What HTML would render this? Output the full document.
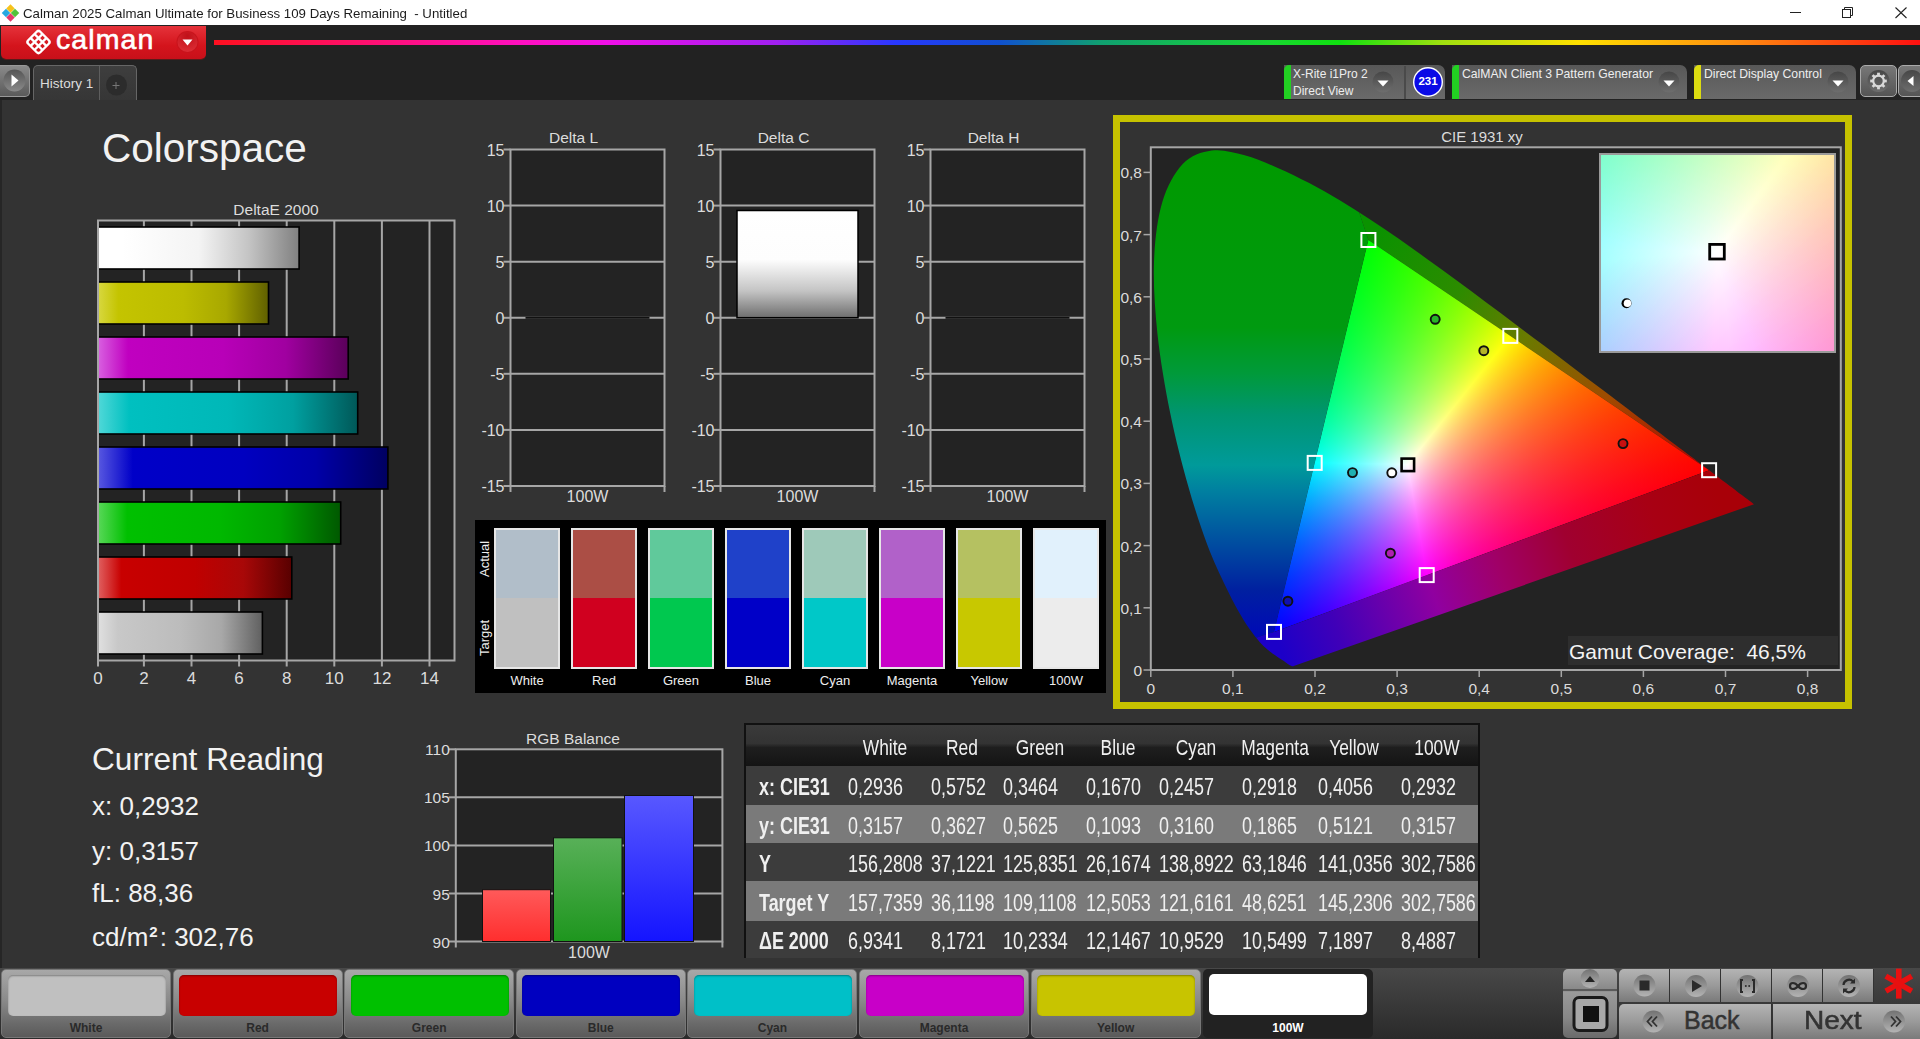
<!DOCTYPE html><html><head><meta charset="utf-8"><title>Calman</title><style>
*{box-sizing:border-box;margin:0;padding:0}
html,body{width:1920px;height:1039px;overflow:hidden}
body{position:relative;background:#333;font-family:"Liberation Sans",sans-serif;color:#eee}
.a{position:absolute}
.t{position:absolute;white-space:nowrap;line-height:1}
svg{position:absolute;left:0;top:0;overflow:visible}
</style></head><body><div class="a" style="left:0;top:0;width:1920px;height:25px;background:#fff"></div><svg width="24" height="25" style="left:0;top:2.5px">
<rect x="7.5" y="2.5" width="6" height="6" transform="rotate(45 10.5 5.5)" fill="#f6c21c"/>
<rect x="3" y="7" width="6" height="6" transform="rotate(45 6 10)" fill="#27a8e0"/>
<rect x="12" y="7" width="6" height="6" transform="rotate(45 15 10)" fill="#52c23a"/>
<rect x="7.5" y="11.5" width="6" height="6" transform="rotate(45 10.5 14.5)" fill="#e4386a"/>
</svg><div class="t" style="left:23px;top:6.5px;font-size:13.5px;color:#1b1b1b;transform:scaleX(0.982);transform-origin:0 0">Calman 2025 Calman Ultimate for Business 109 Days Remaining &nbsp;- Untitled</div><svg width="1920" height="25">
<line x1="1790" y1="12.5" x2="1801" y2="12.5" stroke="#222" stroke-width="1"/>
<rect x="1842.5" y="9.5" width="8" height="8" fill="none" stroke="#222" stroke-width="1"/>
<path d="M1844.5 9.5V7.5h8v8h-2" fill="none" stroke="#222" stroke-width="1"/>
<path d="M1895.5 7.5l11 10.5M1906.5 7.5l-11 10.5" stroke="#222" stroke-width="1.1"/>
</svg><div class="a" style="left:0;top:25px;width:1920px;height:75px;background:#222"></div><div class="a" style="left:1px;top:26px;width:205px;height:33px;border-radius:0 0 5px 5px;background:linear-gradient(#e5323a,#d4141c 60%,#c8101a);box-shadow:0 1px 0 #5a1a1a"></div><svg width="220" height="60" style="left:0;top:25px">
<g transform="translate(38.5 17) rotate(45)" fill="none" stroke="#fff" stroke-width="2.4">
<rect x="-8.5" y="-8.5" width="17" height="17" rx="2.5"/>
<line x1="-2.8" y1="-8.5" x2="-2.8" y2="8.5"/><line x1="2.8" y1="-8.5" x2="2.8" y2="8.5"/>
<line x1="-8.5" y1="-2.8" x2="8.5" y2="-2.8"/><line x1="-8.5" y1="2.8" x2="8.5" y2="2.8"/>
</g>
<circle cx="187.5" cy="17" r="11" fill="#c8141c"/>
<circle cx="187.5" cy="17" r="10" fill="url(#rbtn)"/>
<path d="M182.5 14.5h10l-5 6z" fill="#fff"/>
<defs><radialGradient id="rbtn" cx="0.5" cy="0.2" r="0.9"><stop offset="0" stop-color="#c01018"/><stop offset="1" stop-color="#e03038"/></radialGradient></defs>
</svg><div class="t" style="left:56px;top:24.7px;font-size:28.5px;color:#fff;letter-spacing:1.1px;-webkit-text-stroke:0.6px #fff">calman</div><div class="a" style="left:214px;top:40px;width:1706px;height:5px;background:linear-gradient(90deg,#ff1020 0%,#ff10c0 18%,#f010e8 23%,#a020f0 33%,#2838ff 40%,#1050d0 46%,#10a070 52%,#18d830 62%,#10e010 66%,#a0e010 72%,#ffe000 80%,#ff9010 89%,#ff1010 100%)"></div><div class="a" style="left:0;top:65px;width:30px;height:32px;border-radius:0 5px 5px 0;background:linear-gradient(#8a8a8a,#5a5a5a);border:1px solid #999;border-left:none"></div><svg width="40" height="40" style="left:0;top:62px">
<circle cx="14.5" cy="18.5" r="11" fill="url(#pg)"/>
<path d="M11.5 12.5l7 6-7 6z" fill="#fff"/>
<defs><linearGradient id="pg" x1="0" y1="0" x2="0" y2="1"><stop offset="0" stop-color="#555"/><stop offset="1" stop-color="#8a8a8a"/></linearGradient></defs>
</svg><div class="a" style="left:33px;top:65px;width:104px;height:35px;border-radius:5px 5px 0 0;background:linear-gradient(#3e3e3e,#363636);border:1px solid #666;border-bottom:none"></div><div class="a" style="left:98.5px;top:66px;width:1.5px;height:34px;background:#5e5e5e"></div><div class="t" style="left:40px;top:76.5px;font-size:13.5px;color:#ddd">History 1</div><svg width="40" height="40" style="left:96px;top:62px">
<circle cx="20.5" cy="23" r="10.5" fill="#2c2c2c"/>
<path d="M16.5 23.5h7M20 20v7" stroke="#777" stroke-width="1"/>
</svg><div class="a" style="left:1284px;top:65px;width:161px;height:34px;border-radius:0 7px 0 0;background:linear-gradient(#585858,#6a6a6a)"></div><div class="a" style="left:1284px;top:65px;width:7px;height:34px;border-radius:5px 0 0 0;background:#22d022"></div><div class="a" style="left:1452px;top:65px;width:235px;height:34px;border-radius:0 7px 0 0;background:linear-gradient(#585858,#6a6a6a)"></div><div class="a" style="left:1452px;top:65px;width:7px;height:34px;border-radius:5px 0 0 0;background:#22d022"></div><div class="a" style="left:1694px;top:65px;width:162px;height:34px;border-radius:0 7px 0 0;background:linear-gradient(#585858,#6a6a6a)"></div><div class="a" style="left:1694px;top:65px;width:7px;height:34px;border-radius:5px 0 0 0;background:#dcdc10"></div><div class="a" style="left:1404px;top:66px;width:2px;height:33px;background:#4a4a4a"></div><div class="t" style="left:1293px;top:66px;font-size:12px;color:#eee;line-height:17px">X-Rite i1Pro 2<br>Direct View</div><div class="t" style="left:1462px;top:68px;font-size:12.2px;color:#eee">CalMAN Client 3 Pattern Generator</div><div class="t" style="left:1704px;top:68px;font-size:12.2px;color:#eee">Direct Display Control</div><svg width="1920" height="110">
<defs><linearGradient id="ddg" x1="0" y1="0" x2="0" y2="1"><stop offset="0" stop-color="#464646"/><stop offset="1" stop-color="#6e6e6e"/></linearGradient></defs>
<circle cx="1383" cy="82" r="10.5" fill="url(#ddg)"/><path d="M1377.5 80.5h11l-5.5 6z" fill="#fff"/><circle cx="1669" cy="82" r="10.5" fill="url(#ddg)"/><path d="M1663.5 80.5h11l-5.5 6z" fill="#fff"/><circle cx="1838" cy="82" r="10.5" fill="url(#ddg)"/><path d="M1832.5 80.5h11l-5.5 6z" fill="#fff"/>
<circle cx="1428" cy="82" r="15" fill="#fff"/><circle cx="1428" cy="82" r="13.6" fill="#0a0ae6"/>
</svg><div class="t" style="left:1414px;top:76px;width:28px;text-align:center;font-size:11.5px;font-weight:bold;color:#fff">231</div><div class="a" style="left:1860px;top:65px;width:37px;height:32px;border-radius:5px;background:linear-gradient(#777,#555);border:1px solid #aaa"></div><div class="a" style="left:1898px;top:65px;width:30px;height:32px;border-radius:5px;background:linear-gradient(#777,#555);border:1px solid #aaa"></div><svg width="1920" height="110">
<circle cx="1878.5" cy="81" r="11" fill="url(#ddg)"/>
<g transform="translate(1878.5 81)"><rect x="-1.4" y="-8.3" width="2.8" height="3.6" fill="#d8d8d8" transform="rotate(0)"/><rect x="-1.4" y="-8.3" width="2.8" height="3.6" fill="#d8d8d8" transform="rotate(45)"/><rect x="-1.4" y="-8.3" width="2.8" height="3.6" fill="#d8d8d8" transform="rotate(90)"/><rect x="-1.4" y="-8.3" width="2.8" height="3.6" fill="#d8d8d8" transform="rotate(135)"/><rect x="-1.4" y="-8.3" width="2.8" height="3.6" fill="#d8d8d8" transform="rotate(180)"/><rect x="-1.4" y="-8.3" width="2.8" height="3.6" fill="#d8d8d8" transform="rotate(225)"/><rect x="-1.4" y="-8.3" width="2.8" height="3.6" fill="#d8d8d8" transform="rotate(270)"/><rect x="-1.4" y="-8.3" width="2.8" height="3.6" fill="#d8d8d8" transform="rotate(315)"/><circle r="5.3" fill="none" stroke="#d8d8d8" stroke-width="2.2"/></g>
<circle cx="1912" cy="81" r="11" fill="url(#ddg)"/>
<path d="M1913.5 76l-6 5 6 5z" fill="#fff"/>
</svg><div class="a" style="left:0;top:100px;width:1920px;height:868px;background:#333"></div><div class="a" style="left:0;top:100px;width:2px;height:868px;background:#262626"></div><div class="t" style="left:102px;top:127.7px;font-size:40.5px;color:#f2f2f2">Colorspace</div><svg width="1920" height="1039"><defs><linearGradient id="deb0" x1="0" y1="0" x2="1" y2="0"><stop offset="0" stop-color="#ffffff"/><stop offset="0.12" stop-color="#ffffff"/><stop offset="0.5" stop-color="#f4f4f4"/><stop offset="0.75" stop-color="#c4c4c4"/><stop offset="1" stop-color="#808080"/></linearGradient><linearGradient id="deb1" x1="0" y1="0" x2="1" y2="0"><stop offset="0" stop-color="#d8d840"/><stop offset="0.12" stop-color="#c4c400"/><stop offset="0.5" stop-color="#bcbc00"/><stop offset="0.75" stop-color="#a8a800"/><stop offset="1" stop-color="#606000"/></linearGradient><linearGradient id="deb2" x1="0" y1="0" x2="1" y2="0"><stop offset="0" stop-color="#d860e0"/><stop offset="0.12" stop-color="#c000c0"/><stop offset="0.5" stop-color="#b800b8"/><stop offset="0.75" stop-color="#a000a0"/><stop offset="1" stop-color="#5a005a"/></linearGradient><linearGradient id="deb3" x1="0" y1="0" x2="1" y2="0"><stop offset="0" stop-color="#50d8d8"/><stop offset="0.12" stop-color="#00c0c0"/><stop offset="0.5" stop-color="#00b8b8"/><stop offset="0.75" stop-color="#00a0a0"/><stop offset="1" stop-color="#005858"/></linearGradient><linearGradient id="deb4" x1="0" y1="0" x2="1" y2="0"><stop offset="0" stop-color="#5858e0"/><stop offset="0.12" stop-color="#0000c8"/><stop offset="0.5" stop-color="#0000c0"/><stop offset="0.75" stop-color="#0000a8"/><stop offset="1" stop-color="#000060"/></linearGradient><linearGradient id="deb5" x1="0" y1="0" x2="1" y2="0"><stop offset="0" stop-color="#58d858"/><stop offset="0.12" stop-color="#00c000"/><stop offset="0.5" stop-color="#00b800"/><stop offset="0.75" stop-color="#00a000"/><stop offset="1" stop-color="#005800"/></linearGradient><linearGradient id="deb6" x1="0" y1="0" x2="1" y2="0"><stop offset="0" stop-color="#e06060"/><stop offset="0.12" stop-color="#c80000"/><stop offset="0.5" stop-color="#c00000"/><stop offset="0.75" stop-color="#a80808"/><stop offset="1" stop-color="#580000"/></linearGradient><linearGradient id="deb7" x1="0" y1="0" x2="1" y2="0"><stop offset="0" stop-color="#e0e0e0"/><stop offset="0.12" stop-color="#c8c8c8"/><stop offset="0.5" stop-color="#bcbcbc"/><stop offset="0.75" stop-color="#a8a8a8"/><stop offset="1" stop-color="#606060"/></linearGradient></defs><rect x="98" y="220.5" width="356.5" height="440" fill="#232323" stroke="#a6a6a6" stroke-width="2"/><line x1="143.9" y1="220.5" x2="143.9" y2="666.5" stroke="#a6a6a6" stroke-width="2"/><line x1="191.5" y1="220.5" x2="191.5" y2="666.5" stroke="#a6a6a6" stroke-width="2"/><line x1="239.1" y1="220.5" x2="239.1" y2="666.5" stroke="#a6a6a6" stroke-width="2"/><line x1="286.7" y1="220.5" x2="286.7" y2="666.5" stroke="#a6a6a6" stroke-width="2"/><line x1="334.3" y1="220.5" x2="334.3" y2="666.5" stroke="#a6a6a6" stroke-width="2"/><line x1="381.9" y1="220.5" x2="381.9" y2="666.5" stroke="#a6a6a6" stroke-width="2"/><line x1="429.5" y1="220.5" x2="429.5" y2="666.5" stroke="#a6a6a6" stroke-width="2"/><line x1="98" y1="660.5" x2="98" y2="666.5" stroke="#a6a6a6" stroke-width="2"/><rect x="98" y="227" width="201.1" height="42" fill="url(#deb0)" stroke="#000" stroke-width="1.6"/><rect x="98" y="282" width="170.5" height="42" fill="url(#deb1)" stroke="#000" stroke-width="1.6"/><rect x="98" y="337" width="250.2" height="42" fill="url(#deb2)" stroke="#000" stroke-width="1.6"/><rect x="98" y="392" width="259.7" height="42" fill="url(#deb3)" stroke="#000" stroke-width="1.6"/><rect x="98" y="447" width="289.9" height="42" fill="url(#deb4)" stroke="#000" stroke-width="1.6"/><rect x="98" y="502" width="242.7" height="42" fill="url(#deb5)" stroke="#000" stroke-width="1.6"/><rect x="98" y="557" width="193.8" height="42" fill="url(#deb6)" stroke="#000" stroke-width="1.6"/><rect x="98" y="612" width="164.4" height="42" fill="url(#deb7)" stroke="#000" stroke-width="1.6"/><rect x="97" y="220" width="2" height="441" fill="#a6a6a6"/><text x="98" y="684" text-anchor="middle" font-size="17" fill="#dcdcdc">0</text><text x="143.9" y="684" text-anchor="middle" font-size="17" fill="#dcdcdc">2</text><text x="191.5" y="684" text-anchor="middle" font-size="17" fill="#dcdcdc">4</text><text x="239.1" y="684" text-anchor="middle" font-size="17" fill="#dcdcdc">6</text><text x="286.7" y="684" text-anchor="middle" font-size="17" fill="#dcdcdc">8</text><text x="334.3" y="684" text-anchor="middle" font-size="17" fill="#dcdcdc">10</text><text x="381.9" y="684" text-anchor="middle" font-size="17" fill="#dcdcdc">12</text><text x="429.5" y="684" text-anchor="middle" font-size="17" fill="#dcdcdc">14</text><text x="276" y="215" text-anchor="middle" font-size="15.5" fill="#dcdcdc">DeltaE 2000</text></svg><svg width="1920" height="1039"><defs><linearGradient id="dcb" x1="0" y1="0" x2="0" y2="1"><stop offset="0" stop-color="#fff"/><stop offset="0.46" stop-color="#fdfdfd"/><stop offset="0.75" stop-color="#c4c4c4"/><stop offset="1" stop-color="#6e6e6e"/></linearGradient></defs><rect x="510.5" y="149.5" width="154" height="336.5" fill="#232323" stroke="#a6a6a6" stroke-width="2"/><line x1="503.5" y1="149.5" x2="510.5" y2="149.5" stroke="#a6a6a6" stroke-width="2"/><text x="504.5" y="155.5" text-anchor="end" font-size="16" fill="#dcdcdc">15</text><line x1="510.5" y1="205.6" x2="664.5" y2="205.6" stroke="#a6a6a6" stroke-width="2"/><line x1="503.5" y1="205.6" x2="510.5" y2="205.6" stroke="#a6a6a6" stroke-width="2"/><text x="504.5" y="211.6" text-anchor="end" font-size="16" fill="#dcdcdc">10</text><line x1="510.5" y1="261.7" x2="664.5" y2="261.7" stroke="#a6a6a6" stroke-width="2"/><line x1="503.5" y1="261.7" x2="510.5" y2="261.7" stroke="#a6a6a6" stroke-width="2"/><text x="504.5" y="267.7" text-anchor="end" font-size="16" fill="#dcdcdc">5</text><line x1="510.5" y1="317.8" x2="664.5" y2="317.8" stroke="#a6a6a6" stroke-width="2"/><line x1="503.5" y1="317.8" x2="510.5" y2="317.8" stroke="#a6a6a6" stroke-width="2"/><text x="504.5" y="323.8" text-anchor="end" font-size="16" fill="#dcdcdc">0</text><line x1="510.5" y1="373.8" x2="664.5" y2="373.8" stroke="#a6a6a6" stroke-width="2"/><line x1="503.5" y1="373.8" x2="510.5" y2="373.8" stroke="#a6a6a6" stroke-width="2"/><text x="504.5" y="379.8" text-anchor="end" font-size="16" fill="#dcdcdc">-5</text><line x1="510.5" y1="429.9" x2="664.5" y2="429.9" stroke="#a6a6a6" stroke-width="2"/><line x1="503.5" y1="429.9" x2="510.5" y2="429.9" stroke="#a6a6a6" stroke-width="2"/><text x="504.5" y="435.9" text-anchor="end" font-size="16" fill="#dcdcdc">-10</text><line x1="503.5" y1="486" x2="510.5" y2="486" stroke="#a6a6a6" stroke-width="2"/><text x="504.5" y="492" text-anchor="end" font-size="16" fill="#dcdcdc">-15</text><line x1="510.5" y1="486" x2="510.5" y2="492" stroke="#a6a6a6" stroke-width="2"/><line x1="664.5" y1="486" x2="664.5" y2="492" stroke="#a6a6a6" stroke-width="2"/><text x="573.5" y="143" text-anchor="middle" font-size="15.5" fill="#dcdcdc">Delta L</text><text x="587.5" y="502" text-anchor="middle" font-size="16" fill="#dcdcdc">100W</text><line x1="525.5" y1="317.8" x2="649.5" y2="317.8" stroke="#111" stroke-width="2"/><rect x="720.5" y="149.5" width="154" height="336.5" fill="#232323" stroke="#a6a6a6" stroke-width="2"/><line x1="713.5" y1="149.5" x2="720.5" y2="149.5" stroke="#a6a6a6" stroke-width="2"/><text x="714.5" y="155.5" text-anchor="end" font-size="16" fill="#dcdcdc">15</text><line x1="720.5" y1="205.6" x2="874.5" y2="205.6" stroke="#a6a6a6" stroke-width="2"/><line x1="713.5" y1="205.6" x2="720.5" y2="205.6" stroke="#a6a6a6" stroke-width="2"/><text x="714.5" y="211.6" text-anchor="end" font-size="16" fill="#dcdcdc">10</text><line x1="720.5" y1="261.7" x2="874.5" y2="261.7" stroke="#a6a6a6" stroke-width="2"/><line x1="713.5" y1="261.7" x2="720.5" y2="261.7" stroke="#a6a6a6" stroke-width="2"/><text x="714.5" y="267.7" text-anchor="end" font-size="16" fill="#dcdcdc">5</text><line x1="720.5" y1="317.8" x2="874.5" y2="317.8" stroke="#a6a6a6" stroke-width="2"/><line x1="713.5" y1="317.8" x2="720.5" y2="317.8" stroke="#a6a6a6" stroke-width="2"/><text x="714.5" y="323.8" text-anchor="end" font-size="16" fill="#dcdcdc">0</text><line x1="720.5" y1="373.8" x2="874.5" y2="373.8" stroke="#a6a6a6" stroke-width="2"/><line x1="713.5" y1="373.8" x2="720.5" y2="373.8" stroke="#a6a6a6" stroke-width="2"/><text x="714.5" y="379.8" text-anchor="end" font-size="16" fill="#dcdcdc">-5</text><line x1="720.5" y1="429.9" x2="874.5" y2="429.9" stroke="#a6a6a6" stroke-width="2"/><line x1="713.5" y1="429.9" x2="720.5" y2="429.9" stroke="#a6a6a6" stroke-width="2"/><text x="714.5" y="435.9" text-anchor="end" font-size="16" fill="#dcdcdc">-10</text><line x1="713.5" y1="486" x2="720.5" y2="486" stroke="#a6a6a6" stroke-width="2"/><text x="714.5" y="492" text-anchor="end" font-size="16" fill="#dcdcdc">-15</text><line x1="720.5" y1="486" x2="720.5" y2="492" stroke="#a6a6a6" stroke-width="2"/><line x1="874.5" y1="486" x2="874.5" y2="492" stroke="#a6a6a6" stroke-width="2"/><text x="783.5" y="143" text-anchor="middle" font-size="15.5" fill="#dcdcdc">Delta C</text><text x="797.5" y="502" text-anchor="middle" font-size="16" fill="#dcdcdc">100W</text><rect x="737" y="210.5" width="121" height="107.2" fill="url(#dcb)" stroke="#000" stroke-width="1.5"/><rect x="930.5" y="149.5" width="154" height="336.5" fill="#232323" stroke="#a6a6a6" stroke-width="2"/><line x1="923.5" y1="149.5" x2="930.5" y2="149.5" stroke="#a6a6a6" stroke-width="2"/><text x="924.5" y="155.5" text-anchor="end" font-size="16" fill="#dcdcdc">15</text><line x1="930.5" y1="205.6" x2="1084.5" y2="205.6" stroke="#a6a6a6" stroke-width="2"/><line x1="923.5" y1="205.6" x2="930.5" y2="205.6" stroke="#a6a6a6" stroke-width="2"/><text x="924.5" y="211.6" text-anchor="end" font-size="16" fill="#dcdcdc">10</text><line x1="930.5" y1="261.7" x2="1084.5" y2="261.7" stroke="#a6a6a6" stroke-width="2"/><line x1="923.5" y1="261.7" x2="930.5" y2="261.7" stroke="#a6a6a6" stroke-width="2"/><text x="924.5" y="267.7" text-anchor="end" font-size="16" fill="#dcdcdc">5</text><line x1="930.5" y1="317.8" x2="1084.5" y2="317.8" stroke="#a6a6a6" stroke-width="2"/><line x1="923.5" y1="317.8" x2="930.5" y2="317.8" stroke="#a6a6a6" stroke-width="2"/><text x="924.5" y="323.8" text-anchor="end" font-size="16" fill="#dcdcdc">0</text><line x1="930.5" y1="373.8" x2="1084.5" y2="373.8" stroke="#a6a6a6" stroke-width="2"/><line x1="923.5" y1="373.8" x2="930.5" y2="373.8" stroke="#a6a6a6" stroke-width="2"/><text x="924.5" y="379.8" text-anchor="end" font-size="16" fill="#dcdcdc">-5</text><line x1="930.5" y1="429.9" x2="1084.5" y2="429.9" stroke="#a6a6a6" stroke-width="2"/><line x1="923.5" y1="429.9" x2="930.5" y2="429.9" stroke="#a6a6a6" stroke-width="2"/><text x="924.5" y="435.9" text-anchor="end" font-size="16" fill="#dcdcdc">-10</text><line x1="923.5" y1="486" x2="930.5" y2="486" stroke="#a6a6a6" stroke-width="2"/><text x="924.5" y="492" text-anchor="end" font-size="16" fill="#dcdcdc">-15</text><line x1="930.5" y1="486" x2="930.5" y2="492" stroke="#a6a6a6" stroke-width="2"/><line x1="1084.5" y1="486" x2="1084.5" y2="492" stroke="#a6a6a6" stroke-width="2"/><text x="993.5" y="143" text-anchor="middle" font-size="15.5" fill="#dcdcdc">Delta H</text><text x="1007.5" y="502" text-anchor="middle" font-size="16" fill="#dcdcdc">100W</text><line x1="945.5" y1="317.8" x2="1069.5" y2="317.8" stroke="#111" stroke-width="2"/></svg><div class="a" style="left:475px;top:520px;width:631px;height:173px;background:#000"></div><div class="a" style="left:494px;top:528px;width:66px;height:141px;border:2px solid #e6e6e6;background:linear-gradient(#b1bec9 50%,#c0c0c0 50%)"></div><div class="t" style="left:494px;top:674px;width:66px;text-align:center;font-size:13px;color:#eee">White</div><div class="a" style="left:571px;top:528px;width:66px;height:141px;border:2px solid #e6e6e6;background:linear-gradient(#ab4e45 50%,#d0001f 50%)"></div><div class="t" style="left:571px;top:674px;width:66px;text-align:center;font-size:13px;color:#eee">Red</div><div class="a" style="left:648px;top:528px;width:66px;height:141px;border:2px solid #e6e6e6;background:linear-gradient(#60c99b 50%,#00c84f 50%)"></div><div class="t" style="left:648px;top:674px;width:66px;text-align:center;font-size:13px;color:#eee">Green</div><div class="a" style="left:725px;top:528px;width:66px;height:141px;border:2px solid #e6e6e6;background:linear-gradient(#1f41c9 50%,#0000c8 50%)"></div><div class="t" style="left:725px;top:674px;width:66px;text-align:center;font-size:13px;color:#eee">Blue</div><div class="a" style="left:802px;top:528px;width:66px;height:141px;border:2px solid #e6e6e6;background:linear-gradient(#9ec9b9 50%,#00c8c8 50%)"></div><div class="t" style="left:802px;top:674px;width:66px;text-align:center;font-size:13px;color:#eee">Cyan</div><div class="a" style="left:879px;top:528px;width:66px;height:141px;border:2px solid #e6e6e6;background:linear-gradient(#b161c9 50%,#c800c8 50%)"></div><div class="t" style="left:879px;top:674px;width:66px;text-align:center;font-size:13px;color:#eee">Magenta</div><div class="a" style="left:956px;top:528px;width:66px;height:141px;border:2px solid #e6e6e6;background:linear-gradient(#b5c161 50%,#c8c800 50%)"></div><div class="t" style="left:956px;top:674px;width:66px;text-align:center;font-size:13px;color:#eee">Yellow</div><div class="a" style="left:1033px;top:528px;width:66px;height:141px;border:2px solid #e6e6e6;background:linear-gradient(#e1f1fc 50%,#ececec 50%)"></div><div class="t" style="left:1033px;top:674px;width:66px;text-align:center;font-size:13px;color:#eee">100W</div><div class="t" style="left:477px;top:562px;width:16px;height:14px;font-size:13px;color:#eee;transform:rotate(-90deg);transform-origin:8px 7px;text-align:center;">Actual</div><div class="t" style="left:477px;top:641px;width:16px;height:14px;font-size:13px;color:#eee;transform:rotate(-90deg);transform-origin:8px 7px;text-align:center;">Target</div><div class="a" style="left:1113px;top:114.5px;width:739px;height:594px;border:7.5px solid #c6c200"></div><svg width="1920" height="1039"><defs><clipPath id="loc"><path d="M1293.7 666.1C1293.7 666.1 1293.6 666.1 1293.5 666.2C1293.4 666.2 1293.2 666.2 1293.1 666.2C1292.9 666.2 1292.8 666.2 1292.5 666.2C1292.2 666.2 1291.8 666.1 1291.5 666C1291.2 665.9 1291 665.8 1290.6 665.6C1290.3 665.4 1289.9 665.2 1289.5 664.9C1289 664.6 1288.4 664.3 1287.8 663.9C1287.2 663.4 1286.6 663 1285.8 662.4C1285 661.9 1284.1 661.3 1283.1 660.6C1282 659.9 1280.8 659.1 1279.4 658.2C1278 657.3 1276.5 656.3 1274.8 655.1C1273 653.8 1271.1 652.5 1269 650.7C1266.9 648.9 1264.8 647.3 1262 644.4C1259.3 641.5 1256.2 638.1 1252.7 633.2C1249.1 628.4 1245.3 623 1240.8 615.2C1236.3 607.4 1231.4 598.5 1225.8 586.7C1220.2 574.9 1213.5 561.2 1207.2 544.4C1200.9 527.5 1194.3 507.7 1188.1 485.7C1181.9 463.7 1175.2 437.7 1170.1 412.5C1165 387.3 1160.2 359.4 1157.5 334.3C1154.9 309.2 1153.2 283.9 1154 261.9C1154.8 240 1157.4 218.9 1162.2 202.6C1167 186.3 1174.5 172.8 1182.7 164.1C1191 155.5 1201.5 152 1211.8 150.6C1222.1 149.1 1233.6 152.4 1244.6 155.3C1255.6 158.2 1267 163.3 1277.8 167.9C1288.6 172.6 1298.9 177.7 1309.2 183C1319.4 188.4 1329.3 194.1 1339.3 200C1349.3 206 1359.2 212.3 1369 218.7C1378.9 225.1 1388.6 231.8 1398.4 238.6C1408.2 245.4 1417.9 252.3 1427.7 259.4C1437.5 266.4 1447.3 273.6 1457.1 280.8C1466.9 287.9 1476.6 295.2 1486.3 302.5C1496.1 309.7 1505.8 317 1515.4 324.2C1525 331.4 1534.5 338.6 1543.9 345.6C1553.3 352.7 1562.5 359.7 1571.6 366.5C1580.6 373.4 1589.5 380.1 1598.1 386.6C1606.7 393 1615.1 399.3 1623 405.3C1631 411.3 1638.7 417.2 1645.8 422.6C1652.9 427.9 1659.4 432.8 1665.6 437.5C1671.8 442.2 1677.7 446.6 1683 450.6C1688.3 454.6 1693.1 458.2 1697.4 461.5C1701.8 464.7 1705.6 467.7 1709.2 470.3C1712.7 473 1715.7 475.3 1718.5 477.4C1721.3 479.6 1723.7 481.3 1726 483C1728.2 484.7 1730.2 486.2 1732 487.6C1733.8 489 1735.5 490.2 1737 491.4C1738.5 492.5 1739.9 493.6 1741.1 494.5C1742.3 495.4 1743.4 496.2 1744.4 496.9C1745.3 497.6 1746.1 498.2 1746.8 498.8C1747.6 499.3 1748.2 499.8 1748.7 500.2C1749.3 500.6 1749.6 500.9 1750.1 501.3C1750.6 501.6 1751.1 502 1751.8 502.5C1752.4 503 1753.6 503.9 1754 504.2Z"/></clipPath><linearGradient id="cg1" gradientUnits="userSpaceOnUse" x1="1150.8" y1="159.2" x2="1150.8" y2="669.2"><stop offset="0" stop-color="#009a00"/><stop offset="0.33" stop-color="#009a10"/><stop offset="0.42" stop-color="#009a3a"/><stop offset="0.5" stop-color="#009570"/><stop offset="0.6" stop-color="#009a9a"/><stop offset="0.65" stop-color="#0080a0"/><stop offset="0.747" stop-color="#0050a0"/><stop offset="0.845" stop-color="#0020a0"/><stop offset="0.94" stop-color="#0008b8"/><stop offset="1" stop-color="#0000d0"/></linearGradient><linearGradient id="cg2" gradientUnits="userSpaceOnUse" x1="1368.4" y1="240" x2="1709.1" y2="470.2"><stop offset="0" stop-color="#0a9200"/><stop offset="0.25" stop-color="#2c8c00"/><stop offset="0.45" stop-color="#6a7a00"/><stop offset="0.7" stop-color="#a04a00"/><stop offset="1" stop-color="#b00000"/></linearGradient><linearGradient id="cg3" gradientUnits="userSpaceOnUse" x1="1274" y1="631.9" x2="1709.1" y2="470.2"><stop offset="0" stop-color="#1c00c8"/><stop offset="0.13" stop-color="#4000b8"/><stop offset="0.35" stop-color="#9000a0"/><stop offset="0.5" stop-color="#a00068"/><stop offset="0.66" stop-color="#a00030"/><stop offset="0.85" stop-color="#a80014"/><stop offset="1" stop-color="#a80008"/></linearGradient></defs><rect x="1150.8" y="147" width="690" height="523" fill="#232323"/><g clip-path="url(#loc)"><polygon points="1368.4,240 1274,631.9 974,731.9 968.4,-60 1268.4,-60" fill="url(#cg1)"/><polygon points="1368.4,240 1268.4,-60 2009.1,170.2 2009.1,470.2 1709.1,470.2" fill="url(#cg2)"/><polygon points="1274,631.9 1709.1,470.2 2009.1,470.2 2009.1,770.2 1174,831.9 974,731.9" fill="url(#cg3)"/></g></svg><div class="a" style="left:1150px;top:147px;width:690px;height:523px;isolation:isolate;clip-path:polygon(559.1px 323.2px,218.4px 93px,124px 484.9px);"><div class="a" style="left:0;top:0;width:690px;height:523px;background:#000"></div><div class="a" style="left:0;top:0;width:690px;height:523px;mix-blend-mode:screen"><div class="a" style="left:0;top:0;width:690px;height:523px;background:rgb(255,0,0);clip-path:polygon(256.7px 317.6px,276.3px 428.7px,559.9px 323.2px,360.3px 188.1px)"></div><div class="a" style="left:0;top:0;width:690px;height:523px;background:conic-gradient(from 0deg at 124px 484.9px,rgb(0,0,0) 13.547deg,rgb(6,0,0) 14.503deg,rgb(13,0,0) 15.470deg,rgb(20,0,0) 16.449deg,rgb(27,0,0) 17.439deg,rgb(34,0,0) 18.438deg,rgb(42,0,0) 19.448deg,rgb(49,0,0) 20.467deg,rgb(58,0,0) 21.494deg,rgb(66,0,0) 22.530deg,rgb(75,0,0) 23.574deg,rgb(84,0,0) 24.625deg,rgb(94,0,0) 25.682deg,rgb(104,0,0) 26.745deg,rgb(115,0,0) 27.813deg,rgb(126,0,0) 28.885deg,rgb(137,0,0) 29.961deg,rgb(150,0,0) 31.040deg,rgb(162,0,0) 32.121deg,rgb(176,0,0) 33.203deg,rgb(190,0,0) 34.286deg,rgb(205,0,0) 35.368deg,rgb(221,0,0) 36.450deg,rgb(237,0,0) 37.530deg,rgb(255,0,0) 38.608deg);clip-path:polygon(257.6px 318.4px,361.1px 188.6px,218.2px 92.2px,164.1px 316.5px)"></div><div class="a" style="left:0;top:0;width:690px;height:523px;background:conic-gradient(from 0deg at 218.4px 93px,rgb(255,0,0) 170.118deg,rgb(239,0,0) 171.238deg,rgb(224,0,0) 172.350deg,rgb(209,0,0) 173.452deg,rgb(195,0,0) 174.544deg,rgb(181,0,0) 175.625deg,rgb(168,0,0) 176.694deg,rgb(156,0,0) 177.751deg,rgb(144,0,0) 178.795deg,rgb(132,0,0) 179.827deg,rgb(121,0,0) 180.845deg,rgb(111,0,0) 181.849deg,rgb(100,0,0) 182.838deg,rgb(90,0,0) 183.814deg,rgb(81,0,0) 184.774deg,rgb(71,0,0) 185.720deg,rgb(62,0,0) 186.651deg,rgb(54,0,0) 187.566deg,rgb(45,0,0) 188.467deg,rgb(37,0,0) 189.352deg,rgb(29,0,0) 190.221deg,rgb(22,0,0) 191.076deg,rgb(14,0,0) 191.914deg,rgb(7,0,0) 192.738deg,rgb(0,0,0) 193.547deg);clip-path:polygon(258px 316.9px,164.3px 315.2px,123.4px 485.5px,277.4px 428.5px)"></div></div><div class="a" style="left:0;top:0;width:690px;height:523px;mix-blend-mode:screen"><div class="a" style="left:0;top:0;width:690px;height:523px;background:conic-gradient(from 0deg at 124px 484.9px,rgb(0,255,0) 38.608deg,rgb(0,231,0) 40.111deg,rgb(0,209,0) 41.606deg,rgb(0,190,0) 43.091deg,rgb(0,172,0) 44.564deg,rgb(0,156,0) 46.023deg,rgb(0,142,0) 47.466deg,rgb(0,128,0) 48.892deg,rgb(0,116,0) 50.299deg,rgb(0,104,0) 51.687deg,rgb(0,94,0) 53.053deg,rgb(0,84,0) 54.398deg,rgb(0,75,0) 55.719deg,rgb(0,66,0) 57.017deg,rgb(0,58,0) 58.290deg,rgb(0,51,0) 59.539deg,rgb(0,44,0) 60.761deg,rgb(0,37,0) 61.959deg,rgb(0,31,0) 63.130deg,rgb(0,25,0) 64.275deg,rgb(0,20,0) 65.394deg,rgb(0,14,0) 66.487deg,rgb(0,9,0) 67.554deg,rgb(0,5,0) 68.596deg,rgb(0,0,0) 69.612deg);clip-path:polygon(256.7px 317.6px,276.3px 428.7px,559.9px 323.2px,360.3px 188.1px)"></div><div class="a" style="left:0;top:0;width:690px;height:523px;background:rgb(0,255,0);clip-path:polygon(257.6px 318.4px,361.1px 188.6px,218.2px 92.2px,164.1px 316.5px)"></div><div class="a" style="left:0;top:0;width:690px;height:523px;background:conic-gradient(from 0deg at 559.1px 323.2px,rgb(0,0,0) 249.612deg,rgb(0,6,0) 250.360deg,rgb(0,13,0) 251.121deg,rgb(0,19,0) 251.896deg,rgb(0,26,0) 252.683deg,rgb(0,33,0) 253.483deg,rgb(0,41,0) 254.297deg,rgb(0,48,0) 255.124deg,rgb(0,56,0) 255.964deg,rgb(0,65,0) 256.817deg,rgb(0,74,0) 257.683deg,rgb(0,83,0) 258.562deg,rgb(0,92,0) 259.453deg,rgb(0,102,0) 260.358deg,rgb(0,113,0) 261.274deg,rgb(0,124,0) 262.203deg,rgb(0,136,0) 263.144deg,rgb(0,148,0) 264.096deg,rgb(0,161,0) 265.060deg,rgb(0,174,0) 266.034deg,rgb(0,189,0) 267.020deg,rgb(0,204,0) 268.015deg,rgb(0,220,0) 269.020deg,rgb(0,237,0) 270.034deg,rgb(0,255,0) 271.057deg);clip-path:polygon(258px 316.9px,164.3px 315.2px,123.4px 485.5px,277.4px 428.5px)"></div></div><div class="a" style="left:0;top:0;width:690px;height:523px;mix-blend-mode:screen"><div class="a" style="left:0;top:0;width:690px;height:523px;background:conic-gradient(from 0deg at 218.4px 93px,rgb(0,0,0) 124.038deg,rgb(0,0,4) 125.485deg,rgb(0,0,8) 126.985deg,rgb(0,0,12) 128.536deg,rgb(0,0,17) 130.139deg,rgb(0,0,22) 131.795deg,rgb(0,0,27) 133.503deg,rgb(0,0,32) 135.263deg,rgb(0,0,38) 137.072deg,rgb(0,0,44) 138.931deg,rgb(0,0,51) 140.836deg,rgb(0,0,58) 142.785deg,rgb(0,0,66) 144.775deg,rgb(0,0,75) 146.802deg,rgb(0,0,84) 148.862deg,rgb(0,0,94) 150.951deg,rgb(0,0,105) 153.063deg,rgb(0,0,117) 155.194deg,rgb(0,0,131) 157.337deg,rgb(0,0,146) 159.486deg,rgb(0,0,163) 161.635deg,rgb(0,0,181) 163.779deg,rgb(0,0,203) 165.911deg,rgb(0,0,227) 168.026deg,rgb(0,0,255) 170.118deg);clip-path:polygon(256.7px 317.6px,276.3px 428.7px,559.9px 323.2px,360.3px 188.1px)"></div><div class="a" style="left:0;top:0;width:690px;height:523px;background:conic-gradient(from 0deg at 559.1px 323.2px,rgb(0,0,255) 271.057deg,rgb(0,0,232) 272.418deg,rgb(0,0,211) 273.793deg,rgb(0,0,192) 275.178deg,rgb(0,0,174) 276.574deg,rgb(0,0,158) 277.978deg,rgb(0,0,144) 279.388deg,rgb(0,0,130) 280.804deg,rgb(0,0,118) 282.223deg,rgb(0,0,107) 283.644deg,rgb(0,0,96) 285.065deg,rgb(0,0,86) 286.483deg,rgb(0,0,77) 287.899deg,rgb(0,0,68) 289.308deg,rgb(0,0,60) 290.711deg,rgb(0,0,52) 292.106deg,rgb(0,0,45) 293.490deg,rgb(0,0,38) 294.862deg,rgb(0,0,32) 296.222deg,rgb(0,0,26) 297.567deg,rgb(0,0,20) 298.896deg,rgb(0,0,15) 300.209deg,rgb(0,0,10) 301.504deg,rgb(0,0,5) 302.781deg,rgb(0,0,0) 304.038deg);clip-path:polygon(257.6px 318.4px,361.1px 188.6px,218.2px 92.2px,164.1px 316.5px)"></div><div class="a" style="left:0;top:0;width:690px;height:523px;background:rgb(0,0,255);clip-path:polygon(258px 316.9px,164.3px 315.2px,123.4px 485.5px,277.4px 428.5px)"></div></div></div><svg width="1920" height="1039"><defs></defs><rect x="1150.8" y="147.3" width="690" height="522.7" fill="none" stroke="#a6a6a6" stroke-width="2"/><line x1="1143.5" y1="670" x2="1150.8" y2="670" stroke="#a6a6a6" stroke-width="1.5"/><text x="1142" y="676" text-anchor="end" font-size="15.5" fill="#dcdcdc">0</text><line x1="1150.8" y1="670" x2="1150.8" y2="677" stroke="#a6a6a6" stroke-width="1.5"/><text x="1150.8" y="694" text-anchor="middle" font-size="15.5" fill="#dcdcdc">0</text><line x1="1143.5" y1="607.8" x2="1150.8" y2="607.8" stroke="#a6a6a6" stroke-width="1.5"/><text x="1142" y="613.8" text-anchor="end" font-size="15.5" fill="#dcdcdc">0,1</text><line x1="1232.9" y1="670" x2="1232.9" y2="677" stroke="#a6a6a6" stroke-width="1.5"/><text x="1232.9" y="694" text-anchor="middle" font-size="15.5" fill="#dcdcdc">0,1</text><line x1="1143.5" y1="545.6" x2="1150.8" y2="545.6" stroke="#a6a6a6" stroke-width="1.5"/><text x="1142" y="551.6" text-anchor="end" font-size="15.5" fill="#dcdcdc">0,2</text><line x1="1315" y1="670" x2="1315" y2="677" stroke="#a6a6a6" stroke-width="1.5"/><text x="1315" y="694" text-anchor="middle" font-size="15.5" fill="#dcdcdc">0,2</text><line x1="1143.5" y1="483.4" x2="1150.8" y2="483.4" stroke="#a6a6a6" stroke-width="1.5"/><text x="1142" y="489.4" text-anchor="end" font-size="15.5" fill="#dcdcdc">0,3</text><line x1="1397.1" y1="670" x2="1397.1" y2="677" stroke="#a6a6a6" stroke-width="1.5"/><text x="1397.1" y="694" text-anchor="middle" font-size="15.5" fill="#dcdcdc">0,3</text><line x1="1143.5" y1="421.2" x2="1150.8" y2="421.2" stroke="#a6a6a6" stroke-width="1.5"/><text x="1142" y="427.2" text-anchor="end" font-size="15.5" fill="#dcdcdc">0,4</text><line x1="1479.2" y1="670" x2="1479.2" y2="677" stroke="#a6a6a6" stroke-width="1.5"/><text x="1479.2" y="694" text-anchor="middle" font-size="15.5" fill="#dcdcdc">0,4</text><line x1="1143.5" y1="359" x2="1150.8" y2="359" stroke="#a6a6a6" stroke-width="1.5"/><text x="1142" y="365" text-anchor="end" font-size="15.5" fill="#dcdcdc">0,5</text><line x1="1561.3" y1="670" x2="1561.3" y2="677" stroke="#a6a6a6" stroke-width="1.5"/><text x="1561.3" y="694" text-anchor="middle" font-size="15.5" fill="#dcdcdc">0,5</text><line x1="1143.5" y1="296.8" x2="1150.8" y2="296.8" stroke="#a6a6a6" stroke-width="1.5"/><text x="1142" y="302.8" text-anchor="end" font-size="15.5" fill="#dcdcdc">0,6</text><line x1="1643.4" y1="670" x2="1643.4" y2="677" stroke="#a6a6a6" stroke-width="1.5"/><text x="1643.4" y="694" text-anchor="middle" font-size="15.5" fill="#dcdcdc">0,6</text><line x1="1143.5" y1="234.6" x2="1150.8" y2="234.6" stroke="#a6a6a6" stroke-width="1.5"/><text x="1142" y="240.6" text-anchor="end" font-size="15.5" fill="#dcdcdc">0,7</text><line x1="1725.5" y1="670" x2="1725.5" y2="677" stroke="#a6a6a6" stroke-width="1.5"/><text x="1725.5" y="694" text-anchor="middle" font-size="15.5" fill="#dcdcdc">0,7</text><line x1="1143.5" y1="172.4" x2="1150.8" y2="172.4" stroke="#a6a6a6" stroke-width="1.5"/><text x="1142" y="178.4" text-anchor="end" font-size="15.5" fill="#dcdcdc">0,8</text><line x1="1807.6" y1="670" x2="1807.6" y2="677" stroke="#a6a6a6" stroke-width="1.5"/><text x="1807.6" y="694" text-anchor="middle" font-size="15.5" fill="#dcdcdc">0,8</text><text x="1482" y="142" text-anchor="middle" font-size="15" fill="#dcdcdc">CIE 1931 xy</text><rect x="1702.1" y="463.2" width="14" height="14" fill="none" stroke="#fff" stroke-width="2"/><rect x="1361.4" y="233" width="14" height="14" fill="none" stroke="#fff" stroke-width="2"/><rect x="1267" y="624.9" width="14" height="14" fill="none" stroke="#fff" stroke-width="2"/><rect x="1307.7" y="455.9" width="14" height="14" fill="none" stroke="#fff" stroke-width="2"/><rect x="1419.7" y="568.1" width="14" height="14" fill="none" stroke="#fff" stroke-width="2"/><rect x="1503.3" y="328.9" width="14" height="14" fill="none" stroke="#fff" stroke-width="2"/><rect x="1401.6" y="458.6" width="12.5" height="12.5" fill="none" stroke="#000" stroke-width="2.6"/><circle cx="1391.8" cy="472.8" r="4.5" fill="#ffffff" stroke="#111" stroke-width="1.9"/><circle cx="1623" cy="443.6" r="4.5" fill="#c81010" stroke="#111" stroke-width="1.9"/><circle cx="1435.2" cy="319.3" r="4.5" fill="#28b428" stroke="#111" stroke-width="1.9"/><circle cx="1287.9" cy="601.2" r="4.5" fill="#1010b0" stroke="#111" stroke-width="1.9"/><circle cx="1352.5" cy="472.6" r="4.5" fill="#20b0b0" stroke="#111" stroke-width="1.9"/><circle cx="1390.4" cy="553.2" r="4.5" fill="#b020b0" stroke="#111" stroke-width="1.9"/><circle cx="1483.8" cy="350.7" r="4.5" fill="#b4b428" stroke="#111" stroke-width="1.9"/></svg><div class="a" style="left:1599px;top:152.5px;width:237px;height:200px;border:2px solid #9a9a9a"></div><div class="a" style="left:1601px;top:154.5px;width:233px;height:196px;isolation:isolate;filter:saturate(1.4);overflow:hidden;"><div class="a" style="left:0;top:0;width:233px;height:196px;background:#000"></div><div class="a" style="left:0;top:0;width:233px;height:196px;mix-blend-mode:screen"><div class="a" style="left:0;top:0;width:233px;height:196px;background:rgb(255,0,0);clip-path:polygon(115.2px 97px,223.7px 788.4px,1814.1px 132px,694.5px -708px)"></div><div class="a" style="left:0;top:0;width:233px;height:196px;background:conic-gradient(from 0deg at -635.8px 1142.6px,rgb(0,0,0) 12.244deg,rgb(6,0,0) 13.115deg,rgb(13,0,0) 13.997deg,rgb(20,0,0) 14.892deg,rgb(27,0,0) 15.797deg,rgb(34,0,0) 16.714deg,rgb(42,0,0) 17.642deg,rgb(49,0,0) 18.580deg,rgb(58,0,0) 19.529deg,rgb(66,0,0) 20.487deg,rgb(75,0,0) 21.455deg,rgb(84,0,0) 22.432deg,rgb(94,0,0) 23.418deg,rgb(104,0,0) 24.412deg,rgb(115,0,0) 25.414deg,rgb(126,0,0) 26.422deg,rgb(137,0,0) 27.438deg,rgb(150,0,0) 28.459deg,rgb(162,0,0) 29.486deg,rgb(176,0,0) 30.517deg,rgb(190,0,0) 31.553deg,rgb(205,0,0) 32.592deg,rgb(221,0,0) 33.634deg,rgb(237,0,0) 34.678deg,rgb(255,0,0) 35.724deg);clip-path:polygon(116.1px 97.8px,695.3px -707.5px,-104.6px -1307px,-407.2px 87.1px)"></div><div class="a" style="left:0;top:0;width:233px;height:196px;background:conic-gradient(from 0deg at -104.4px -1306.2px,rgb(255,0,0) 171.083deg,rgb(239,0,0) 172.097deg,rgb(224,0,0) 173.102deg,rgb(209,0,0) 174.098deg,rgb(195,0,0) 175.083deg,rgb(181,0,0) 176.058deg,rgb(168,0,0) 177.022deg,rgb(156,0,0) 177.974deg,rgb(144,0,0) 178.915deg,rgb(132,0,0) 179.844deg,rgb(121,0,0) 180.761deg,rgb(111,0,0) 181.665deg,rgb(100,0,0) 182.557deg,rgb(90,0,0) 183.436deg,rgb(81,0,0) 184.302deg,rgb(71,0,0) 185.155deg,rgb(62,0,0) 185.995deg,rgb(54,0,0) 186.822deg,rgb(45,0,0) 187.636deg,rgb(37,0,0) 188.437deg,rgb(29,0,0) 189.224deg,rgb(22,0,0) 189.999deg,rgb(14,0,0) 190.760deg,rgb(7,0,0) 191.508deg,rgb(0,0,0) 192.244deg);clip-path:polygon(116.4px 96.3px,-407px 85.8px,-636.3px 1143.2px,224.8px 788.2px)"></div></div><div class="a" style="left:0;top:0;width:233px;height:196px;mix-blend-mode:screen"><div class="a" style="left:0;top:0;width:233px;height:196px;background:conic-gradient(from 0deg at -635.8px 1142.6px,rgb(0,255,0) 35.724deg,rgb(0,231,0) 37.189deg,rgb(0,209,0) 38.654deg,rgb(0,190,0) 40.117deg,rgb(0,172,0) 41.575deg,rgb(0,156,0) 43.028deg,rgb(0,142,0) 44.472deg,rgb(0,128,0) 45.907deg,rgb(0,116,0) 47.330deg,rgb(0,104,0) 48.741deg,rgb(0,94,0) 50.137deg,rgb(0,84,0) 51.517deg,rgb(0,75,0) 52.881deg,rgb(0,66,0) 54.225deg,rgb(0,58,0) 55.551deg,rgb(0,51,0) 56.856deg,rgb(0,44,0) 58.139deg,rgb(0,37,0) 59.401deg,rgb(0,31,0) 60.640deg,rgb(0,25,0) 61.856deg,rgb(0,20,0) 63.048deg,rgb(0,14,0) 64.217deg,rgb(0,9,0) 65.361deg,rgb(0,5,0) 66.481deg,rgb(0,0,0) 67.577deg);clip-path:polygon(115.2px 97px,223.7px 788.4px,1814.1px 132px,694.5px -708px)"></div><div class="a" style="left:0;top:0;width:233px;height:196px;background:rgb(0,255,0);clip-path:polygon(116.1px 97.8px,695.3px -707.5px,-104.6px -1307px,-407.2px 87.1px)"></div><div class="a" style="left:0;top:0;width:233px;height:196px;background:conic-gradient(from 0deg at 1813.3px 132px,rgb(0,0,0) 247.577deg,rgb(0,6,0) 248.385deg,rgb(0,13,0) 249.210deg,rgb(0,19,0) 250.050deg,rgb(0,26,0) 250.905deg,rgb(0,33,0) 251.777deg,rgb(0,41,0) 252.665deg,rgb(0,48,0) 253.568deg,rgb(0,56,0) 254.487deg,rgb(0,65,0) 255.422deg,rgb(0,74,0) 256.373deg,rgb(0,83,0) 257.339deg,rgb(0,92,0) 258.321deg,rgb(0,102,0) 259.318deg,rgb(0,113,0) 260.329deg,rgb(0,124,0) 261.356deg,rgb(0,136,0) 262.396deg,rgb(0,148,0) 263.450deg,rgb(0,161,0) 264.518deg,rgb(0,174,0) 265.599deg,rgb(0,189,0) 266.692deg,rgb(0,204,0) 267.796deg,rgb(0,220,0) 268.912deg,rgb(0,237,0) 270.038deg,rgb(0,255,0) 271.174deg);clip-path:polygon(116.4px 96.3px,-407px 85.8px,-636.3px 1143.2px,224.8px 788.2px)"></div></div><div class="a" style="left:0;top:0;width:233px;height:196px;mix-blend-mode:screen"><div class="a" style="left:0;top:0;width:233px;height:196px;background:conic-gradient(from 0deg at -104.4px -1306.2px,rgb(0,0,0) 126.868deg,rgb(0,0,4) 128.363deg,rgb(0,0,8) 129.902deg,rgb(0,0,12) 131.486deg,rgb(0,0,17) 133.114deg,rgb(0,0,22) 134.785deg,rgb(0,0,27) 136.499deg,rgb(0,0,32) 138.252deg,rgb(0,0,38) 140.045deg,rgb(0,0,44) 141.873deg,rgb(0,0,51) 143.735deg,rgb(0,0,58) 145.627deg,rgb(0,0,66) 147.545deg,rgb(0,0,75) 149.487deg,rgb(0,0,84) 151.448deg,rgb(0,0,94) 153.423deg,rgb(0,0,105) 155.408deg,rgb(0,0,117) 157.399deg,rgb(0,0,131) 159.389deg,rgb(0,0,146) 161.376deg,rgb(0,0,163) 163.353deg,rgb(0,0,181) 165.317deg,rgb(0,0,203) 167.262deg,rgb(0,0,227) 169.185deg,rgb(0,0,255) 171.083deg);clip-path:polygon(115.2px 97px,223.7px 788.4px,1814.1px 132px,694.5px -708px)"></div><div class="a" style="left:0;top:0;width:233px;height:196px;background:conic-gradient(from 0deg at 1813.3px 132px,rgb(0,0,255) 271.174deg,rgb(0,0,232) 272.685deg,rgb(0,0,211) 274.209deg,rgb(0,0,192) 275.746deg,rgb(0,0,174) 277.291deg,rgb(0,0,158) 278.844deg,rgb(0,0,144) 280.402deg,rgb(0,0,130) 281.963deg,rgb(0,0,118) 283.524deg,rgb(0,0,107) 285.083deg,rgb(0,0,96) 286.638deg,rgb(0,0,86) 288.187deg,rgb(0,0,77) 289.727deg,rgb(0,0,68) 291.256deg,rgb(0,0,60) 292.772deg,rgb(0,0,52) 294.274deg,rgb(0,0,45) 295.758deg,rgb(0,0,38) 297.225deg,rgb(0,0,32) 298.672deg,rgb(0,0,26) 300.097deg,rgb(0,0,20) 301.501deg,rgb(0,0,15) 302.880deg,rgb(0,0,10) 304.235deg,rgb(0,0,5) 305.565deg,rgb(0,0,0) 306.868deg);clip-path:polygon(116.1px 97.8px,695.3px -707.5px,-104.6px -1307px,-407.2px 87.1px)"></div><div class="a" style="left:0;top:0;width:233px;height:196px;background:rgb(0,0,255);clip-path:polygon(116.4px 96.3px,-407px 85.8px,-636.3px 1143.2px,224.8px 788.2px)"></div></div></div><svg width="1920" height="1039"><rect x="1709.7" y="244.4" width="14.6" height="14.6" fill="none" stroke="#000" stroke-width="2.8"/><circle cx="1626.5" cy="303.2" r="5" fill="#000"/><circle cx="1627.5" cy="303.2" r="3.8" fill="#fff"/></svg><div class="a" style="left:1568px;top:636px;width:270px;height:29px;background:#2e2e2e"></div><div class="t" style="left:1569px;top:641px;font-size:21px;color:#f4f4f4">Gamut Coverage: &nbsp;46,5%</div><div class="t" style="left:92px;top:744px;font-size:31.6px;color:#f2f2f2">Current Reading</div><div class="t" style="left:92px;top:793.2px;font-size:26px;color:#f2f2f2">x: 0,2932</div><div class="t" style="left:92px;top:837.5px;font-size:26px;color:#f2f2f2">y: 0,3157</div><div class="t" style="left:92px;top:879.5px;font-size:26px;color:#f2f2f2">fL: 88,36</div><div class="t" style="left:92px;top:923.8px;font-size:26px;color:#f2f2f2">cd/m<span style="font-size:15px;font-weight:bold;position:relative;top:-8.5px;margin:0 2px 0 1px">2</span>: 302,76</div><svg width="1920" height="1039"><defs><linearGradient id="rbr" x1="0" y1="0" x2="0" y2="1"><stop offset="0" stop-color="#ff5a5a"/><stop offset="1" stop-color="#ff2e2e"/></linearGradient><linearGradient id="rbg" x1="0" y1="0" x2="0" y2="1"><stop offset="0" stop-color="#58b058"/><stop offset="1" stop-color="#1e961e"/></linearGradient><linearGradient id="rbb" x1="0" y1="0" x2="0" y2="1"><stop offset="0" stop-color="#5858ff"/><stop offset="1" stop-color="#1414ff"/></linearGradient></defs><rect x="455.8" y="749.3" width="266.6" height="192.2" fill="#232323" stroke="#a6a6a6" stroke-width="2"/><line x1="448.8" y1="749.3" x2="455.8" y2="749.3" stroke="#a6a6a6" stroke-width="2"/><text x="449.8" y="755.3" text-anchor="end" font-size="15.5" fill="#dcdcdc">110</text><line x1="455.8" y1="797.3" x2="722.4" y2="797.3" stroke="#a6a6a6" stroke-width="2"/><line x1="448.8" y1="797.3" x2="455.8" y2="797.3" stroke="#a6a6a6" stroke-width="2"/><text x="449.8" y="803.3" text-anchor="end" font-size="15.5" fill="#dcdcdc">105</text><line x1="455.8" y1="845.4" x2="722.4" y2="845.4" stroke="#a6a6a6" stroke-width="2"/><line x1="448.8" y1="845.4" x2="455.8" y2="845.4" stroke="#a6a6a6" stroke-width="2"/><text x="449.8" y="851.4" text-anchor="end" font-size="15.5" fill="#dcdcdc">100</text><line x1="455.8" y1="893.5" x2="722.4" y2="893.5" stroke="#a6a6a6" stroke-width="2"/><line x1="448.8" y1="893.5" x2="455.8" y2="893.5" stroke="#a6a6a6" stroke-width="2"/><text x="449.8" y="899.5" text-anchor="end" font-size="15.5" fill="#dcdcdc">95</text><line x1="448.8" y1="941.5" x2="455.8" y2="941.5" stroke="#a6a6a6" stroke-width="2"/><text x="449.8" y="947.5" text-anchor="end" font-size="15.5" fill="#dcdcdc">90</text><line x1="455.8" y1="941.5" x2="455.8" y2="947.5" stroke="#a6a6a6" stroke-width="2"/><line x1="722.4" y1="941.5" x2="722.4" y2="947.5" stroke="#a6a6a6" stroke-width="2"/><rect x="482.5" y="889.7" width="68" height="51.8" fill="url(#rbr)" stroke="#111" stroke-width="1"/><rect x="553.5" y="837.8" width="68.5" height="103.7" fill="url(#rbg)" stroke="#111" stroke-width="1"/><rect x="624.5" y="795.5" width="69" height="146" fill="url(#rbb)" stroke="#111" stroke-width="1"/><text x="573" y="744" text-anchor="middle" font-size="15.5" fill="#dcdcdc">RGB Balance</text><text x="589" y="958" text-anchor="middle" font-size="16" fill="#dcdcdc">100W</text></svg><div class="a" style="left:744px;top:723px;width:736px;height:235px;background:#111"></div><div class="a" style="left:746px;top:725px;width:732px;height:41px;background:linear-gradient(#3a3a3a,#333 45%,#1e1e1e 55%,#141414)"></div><div class="a" style="left:746px;top:765.5px;width:732px;height:39px;background:#3c3c3c"></div><div class="a" style="left:746px;top:804.5px;width:732px;height:38.5px;background:#7a7a7a"></div><div class="a" style="left:746px;top:843px;width:732px;height:38px;background:#3c3c3c"></div><div class="a" style="left:746px;top:881px;width:732px;height:39.8px;background:#7a7a7a"></div><div class="a" style="left:746px;top:920.8px;width:732px;height:37.2px;background:#3c3c3c"></div><div class="t" style="left:825px;top:736.5px;width:120px;text-align:center;font-size:22px;color:#f0f0f0;transform:scaleX(0.79)">White</div><div class="t" style="left:902px;top:736.5px;width:120px;text-align:center;font-size:22px;color:#f0f0f0;transform:scaleX(0.79)">Red</div><div class="t" style="left:980px;top:736.5px;width:120px;text-align:center;font-size:22px;color:#f0f0f0;transform:scaleX(0.79)">Green</div><div class="t" style="left:1058px;top:736.5px;width:120px;text-align:center;font-size:22px;color:#f0f0f0;transform:scaleX(0.79)">Blue</div><div class="t" style="left:1136px;top:736.5px;width:120px;text-align:center;font-size:22px;color:#f0f0f0;transform:scaleX(0.79)">Cyan</div><div class="t" style="left:1215px;top:736.5px;width:120px;text-align:center;font-size:22px;color:#f0f0f0;transform:scaleX(0.79)">Magenta</div><div class="t" style="left:1294px;top:736.5px;width:120px;text-align:center;font-size:22px;color:#f0f0f0;transform:scaleX(0.79)">Yellow</div><div class="t" style="left:1377px;top:736.5px;width:120px;text-align:center;font-size:22px;color:#f0f0f0;transform:scaleX(0.79)">100W</div><div class="t" style="left:759px;top:776px;font-size:23px;font-weight:bold;color:#f0f0f0;transform:scaleX(0.78);transform-origin:0 0">x: CIE31</div><div class="t" style="left:848px;top:776px;font-size:23px;color:#f0f0f0;transform:scaleX(0.78);transform-origin:0 0">0,2936</div><div class="t" style="left:931px;top:776px;font-size:23px;color:#f0f0f0;transform:scaleX(0.78);transform-origin:0 0">0,5752</div><div class="t" style="left:1003px;top:776px;font-size:23px;color:#f0f0f0;transform:scaleX(0.78);transform-origin:0 0">0,3464</div><div class="t" style="left:1086px;top:776px;font-size:23px;color:#f0f0f0;transform:scaleX(0.78);transform-origin:0 0">0,1670</div><div class="t" style="left:1159px;top:776px;font-size:23px;color:#f0f0f0;transform:scaleX(0.78);transform-origin:0 0">0,2457</div><div class="t" style="left:1242px;top:776px;font-size:23px;color:#f0f0f0;transform:scaleX(0.78);transform-origin:0 0">0,2918</div><div class="t" style="left:1318px;top:776px;font-size:23px;color:#f0f0f0;transform:scaleX(0.78);transform-origin:0 0">0,4056</div><div class="t" style="left:1401px;top:776px;font-size:23px;color:#f0f0f0;transform:scaleX(0.78);transform-origin:0 0">0,2932</div><div class="t" style="left:759px;top:814.8px;font-size:23px;font-weight:bold;color:#f0f0f0;transform:scaleX(0.78);transform-origin:0 0">y: CIE31</div><div class="t" style="left:848px;top:814.8px;font-size:23px;color:#f0f0f0;transform:scaleX(0.78);transform-origin:0 0">0,3157</div><div class="t" style="left:931px;top:814.8px;font-size:23px;color:#f0f0f0;transform:scaleX(0.78);transform-origin:0 0">0,3627</div><div class="t" style="left:1003px;top:814.8px;font-size:23px;color:#f0f0f0;transform:scaleX(0.78);transform-origin:0 0">0,5625</div><div class="t" style="left:1086px;top:814.8px;font-size:23px;color:#f0f0f0;transform:scaleX(0.78);transform-origin:0 0">0,1093</div><div class="t" style="left:1159px;top:814.8px;font-size:23px;color:#f0f0f0;transform:scaleX(0.78);transform-origin:0 0">0,3160</div><div class="t" style="left:1242px;top:814.8px;font-size:23px;color:#f0f0f0;transform:scaleX(0.78);transform-origin:0 0">0,1865</div><div class="t" style="left:1318px;top:814.8px;font-size:23px;color:#f0f0f0;transform:scaleX(0.78);transform-origin:0 0">0,5121</div><div class="t" style="left:1401px;top:814.8px;font-size:23px;color:#f0f0f0;transform:scaleX(0.78);transform-origin:0 0">0,3157</div><div class="t" style="left:759px;top:853px;font-size:23px;font-weight:bold;color:#f0f0f0;transform:scaleX(0.78);transform-origin:0 0">Y</div><div class="t" style="left:848px;top:853px;font-size:23px;color:#f0f0f0;transform:scaleX(0.78);transform-origin:0 0">156,2808</div><div class="t" style="left:931px;top:853px;font-size:23px;color:#f0f0f0;transform:scaleX(0.78);transform-origin:0 0">37,1221</div><div class="t" style="left:1003px;top:853px;font-size:23px;color:#f0f0f0;transform:scaleX(0.78);transform-origin:0 0">125,8351</div><div class="t" style="left:1086px;top:853px;font-size:23px;color:#f0f0f0;transform:scaleX(0.78);transform-origin:0 0">26,1674</div><div class="t" style="left:1159px;top:853px;font-size:23px;color:#f0f0f0;transform:scaleX(0.78);transform-origin:0 0">138,8922</div><div class="t" style="left:1242px;top:853px;font-size:23px;color:#f0f0f0;transform:scaleX(0.78);transform-origin:0 0">63,1846</div><div class="t" style="left:1318px;top:853px;font-size:23px;color:#f0f0f0;transform:scaleX(0.78);transform-origin:0 0">141,0356</div><div class="t" style="left:1401px;top:853px;font-size:23px;color:#f0f0f0;transform:scaleX(0.78);transform-origin:0 0">302,7586</div><div class="t" style="left:759px;top:891.9px;font-size:23px;font-weight:bold;color:#f0f0f0;transform:scaleX(0.78);transform-origin:0 0">Target Y</div><div class="t" style="left:848px;top:891.9px;font-size:23px;color:#f0f0f0;transform:scaleX(0.78);transform-origin:0 0">157,7359</div><div class="t" style="left:931px;top:891.9px;font-size:23px;color:#f0f0f0;transform:scaleX(0.78);transform-origin:0 0">36,1198</div><div class="t" style="left:1003px;top:891.9px;font-size:23px;color:#f0f0f0;transform:scaleX(0.78);transform-origin:0 0">109,1108</div><div class="t" style="left:1086px;top:891.9px;font-size:23px;color:#f0f0f0;transform:scaleX(0.78);transform-origin:0 0">12,5053</div><div class="t" style="left:1159px;top:891.9px;font-size:23px;color:#f0f0f0;transform:scaleX(0.78);transform-origin:0 0">121,6161</div><div class="t" style="left:1242px;top:891.9px;font-size:23px;color:#f0f0f0;transform:scaleX(0.78);transform-origin:0 0">48,6251</div><div class="t" style="left:1318px;top:891.9px;font-size:23px;color:#f0f0f0;transform:scaleX(0.78);transform-origin:0 0">145,2306</div><div class="t" style="left:1401px;top:891.9px;font-size:23px;color:#f0f0f0;transform:scaleX(0.78);transform-origin:0 0">302,7586</div><div class="t" style="left:759px;top:930.4px;font-size:23px;font-weight:bold;color:#f0f0f0;transform:scaleX(0.78);transform-origin:0 0">ΔE 2000</div><div class="t" style="left:848px;top:930.4px;font-size:23px;color:#f0f0f0;transform:scaleX(0.78);transform-origin:0 0">6,9341</div><div class="t" style="left:931px;top:930.4px;font-size:23px;color:#f0f0f0;transform:scaleX(0.78);transform-origin:0 0">8,1721</div><div class="t" style="left:1003px;top:930.4px;font-size:23px;color:#f0f0f0;transform:scaleX(0.78);transform-origin:0 0">10,2334</div><div class="t" style="left:1086px;top:930.4px;font-size:23px;color:#f0f0f0;transform:scaleX(0.78);transform-origin:0 0">12,1467</div><div class="t" style="left:1159px;top:930.4px;font-size:23px;color:#f0f0f0;transform:scaleX(0.78);transform-origin:0 0">10,9529</div><div class="t" style="left:1242px;top:930.4px;font-size:23px;color:#f0f0f0;transform:scaleX(0.78);transform-origin:0 0">10,5499</div><div class="t" style="left:1318px;top:930.4px;font-size:23px;color:#f0f0f0;transform:scaleX(0.78);transform-origin:0 0">7,1897</div><div class="t" style="left:1401px;top:930.4px;font-size:23px;color:#f0f0f0;transform:scaleX(0.78);transform-origin:0 0">8,4887</div><div class="a" style="left:0;top:968px;width:1920px;height:71px;background:linear-gradient(#484848,#2a2a2a)"></div><div class="a" style="left:1px;top:969px;width:170px;height:69px;border-radius:5px;background:linear-gradient(#a8a8a8,#8a8a8a 45%,#6a6a6a 80%,#5a5a5a);border:1px solid #777"></div><div class="a" style="left:7.5px;top:975px;width:158px;height:41px;border-radius:5px;background:#c0c0c0;box-shadow:inset 0 1px 2px rgba(0,0,0,.35)"></div><div class="t" style="left:1px;top:1022px;width:170px;text-align:center;font-size:12px;font-weight:bold;color:#2a2a2a">White</div><div class="a" style="left:172.6px;top:969px;width:170px;height:69px;border-radius:5px;background:linear-gradient(#a8a8a8,#8a8a8a 45%,#6a6a6a 80%,#5a5a5a);border:1px solid #777"></div><div class="a" style="left:179.1px;top:975px;width:158px;height:41px;border-radius:5px;background:#c80000;box-shadow:inset 0 1px 2px rgba(0,0,0,.35)"></div><div class="t" style="left:172.6px;top:1022px;width:170px;text-align:center;font-size:12px;font-weight:bold;color:#2a2a2a">Red</div><div class="a" style="left:344.2px;top:969px;width:170px;height:69px;border-radius:5px;background:linear-gradient(#a8a8a8,#8a8a8a 45%,#6a6a6a 80%,#5a5a5a);border:1px solid #777"></div><div class="a" style="left:350.7px;top:975px;width:158px;height:41px;border-radius:5px;background:#00c000;box-shadow:inset 0 1px 2px rgba(0,0,0,.35)"></div><div class="t" style="left:344.2px;top:1022px;width:170px;text-align:center;font-size:12px;font-weight:bold;color:#2a2a2a">Green</div><div class="a" style="left:515.8px;top:969px;width:170px;height:69px;border-radius:5px;background:linear-gradient(#a8a8a8,#8a8a8a 45%,#6a6a6a 80%,#5a5a5a);border:1px solid #777"></div><div class="a" style="left:522.3px;top:975px;width:158px;height:41px;border-radius:5px;background:#0000c0;box-shadow:inset 0 1px 2px rgba(0,0,0,.35)"></div><div class="t" style="left:515.8px;top:1022px;width:170px;text-align:center;font-size:12px;font-weight:bold;color:#2a2a2a">Blue</div><div class="a" style="left:687.4px;top:969px;width:170px;height:69px;border-radius:5px;background:linear-gradient(#a8a8a8,#8a8a8a 45%,#6a6a6a 80%,#5a5a5a);border:1px solid #777"></div><div class="a" style="left:693.9px;top:975px;width:158px;height:41px;border-radius:5px;background:#00c0c8;box-shadow:inset 0 1px 2px rgba(0,0,0,.35)"></div><div class="t" style="left:687.4px;top:1022px;width:170px;text-align:center;font-size:12px;font-weight:bold;color:#2a2a2a">Cyan</div><div class="a" style="left:859px;top:969px;width:170px;height:69px;border-radius:5px;background:linear-gradient(#a8a8a8,#8a8a8a 45%,#6a6a6a 80%,#5a5a5a);border:1px solid #777"></div><div class="a" style="left:865.5px;top:975px;width:158px;height:41px;border-radius:5px;background:#c800c8;box-shadow:inset 0 1px 2px rgba(0,0,0,.35)"></div><div class="t" style="left:859px;top:1022px;width:170px;text-align:center;font-size:12px;font-weight:bold;color:#2a2a2a">Magenta</div><div class="a" style="left:1030.6px;top:969px;width:170px;height:69px;border-radius:5px;background:linear-gradient(#a8a8a8,#8a8a8a 45%,#6a6a6a 80%,#5a5a5a);border:1px solid #777"></div><div class="a" style="left:1037.1px;top:975px;width:158px;height:41px;border-radius:5px;background:#c8c400;box-shadow:inset 0 1px 2px rgba(0,0,0,.35)"></div><div class="t" style="left:1030.6px;top:1022px;width:170px;text-align:center;font-size:12px;font-weight:bold;color:#2a2a2a">Yellow</div><div class="a" style="left:1203px;top:969px;width:170px;height:69px;border-radius:5px;background:#222"></div><div class="a" style="left:1209px;top:974px;width:158px;height:41px;border-radius:5px;background:#fff"></div><div class="t" style="left:1203px;top:1022px;width:170px;text-align:center;font-size:12px;font-weight:bold;color:#fff">100W</div><div class="a" style="left:1563px;top:969px;width:54px;height:69px;border-radius:5px;background:linear-gradient(#a8a8a8,#888 30%,#707070 31%,#9a9a9a 33%,#888 70%,#6a6a6a)"></div><div class="a" style="left:1563px;top:989px;width:54px;height:2px;background:#5a5a5a"></div><div class="a" style="left:1619px;top:969px;width:51px;height:33px;border-radius:5px 0 0 0;background:linear-gradient(#b4b4b4,#9a9a9a 50%,#7a7a7a);border-right:1px solid #333"></div><div class="a" style="left:1670px;top:969px;width:51px;height:33px;border-radius:0;background:linear-gradient(#b4b4b4,#9a9a9a 50%,#7a7a7a);border-right:1px solid #333"></div><div class="a" style="left:1721px;top:969px;width:51px;height:33px;border-radius:0;background:linear-gradient(#b4b4b4,#9a9a9a 50%,#7a7a7a);border-right:1px solid #333"></div><div class="a" style="left:1772px;top:969px;width:51px;height:33px;border-radius:0;background:linear-gradient(#b4b4b4,#9a9a9a 50%,#7a7a7a);border-right:1px solid #333"></div><div class="a" style="left:1823px;top:969px;width:51px;height:33px;border-radius:0;background:linear-gradient(#b4b4b4,#9a9a9a 50%,#7a7a7a);border-right:1px solid #333"></div><div class="a" style="left:1619px;top:1004px;width:153px;height:35px;border-radius:5px 0 0 0;background:linear-gradient(#b4b4b4,#9a9a9a 50%,#7a7a7a);border-right:1px solid #333"></div><div class="a" style="left:1773px;top:1004px;width:147px;height:35px;background:linear-gradient(#b4b4b4,#9a9a9a 50%,#7a7a7a)"></div><div class="t" style="left:1684px;top:1008px;font-size:25px;color:#333;-webkit-text-stroke:0.5px #333">Back</div><div class="t" style="left:1804px;top:1008px;font-size:25px;color:#333;-webkit-text-stroke:0.5px #333;transform:scaleX(1.12);transform-origin:0 0">Next</div><svg width="1920" height="1039"><defs><linearGradient id="cbg" x1="0" y1="0" x2="0" y2="1"><stop offset="0" stop-color="#727272"/><stop offset="1" stop-color="#b4b4b4"/></linearGradient></defs><circle cx="1590" cy="978.5" r="9.5" fill="url(#cbg)"/><path d="M1585 982h10l-5-6z" fill="#222"/><rect x="1574" y="997.5" width="33" height="33" rx="5" fill="#a8a8a8" stroke="#1a1a1a" stroke-width="3"/><rect x="1583" y="1006" width="16" height="16" fill="#111"/><circle cx="1644.5" cy="985.5" r="11" fill="url(#cbg)"/><rect x="1639.5" y="980.5" width="10" height="10" fill="#2a2a2a"/><circle cx="1696" cy="986" r="11" fill="url(#cbg)"/><path d="M1692 980v12l10-6z" fill="#2a2a2a"/><circle cx="1747.5" cy="986" r="11" fill="url(#cbg)"/><path d="M1743 980h-2v12h2M1752 980h2v12h-2" fill="none" stroke="#2a2a2a" stroke-width="2"/><circle cx="1745.8" cy="986" r="1" fill="#2a2a2a"/><circle cx="1749.2" cy="986" r="1" fill="#2a2a2a"/><circle cx="1798" cy="986" r="11" fill="url(#cbg)"/><path d="M1798 986c-3-4-8-4-8 0s5 4 8 0 8-4 8 0-5 4-8 0z" fill="none" stroke="#2a2a2a" stroke-width="2.2"/><circle cx="1849" cy="986" r="11" fill="url(#cbg)"/><path d="M1843.5 985a5.5 5.5 0 0 1 9.5-3.5M1854.5 987a5.5 5.5 0 0 1-9.5 3.5" fill="none" stroke="#2a2a2a" stroke-width="2.2"/><path d="M1855 978.5v5h-5z M1843 993.5v-5h5z" fill="#2a2a2a"/><circle cx="1653.5" cy="1021.5" r="11" fill="url(#cbg)"/><path d="M1652 1016.5l-4.5 5 4.5 5M1657 1016.5l-4.5 5 4.5 5" fill="none" stroke="#333" stroke-width="1.8"/><circle cx="1894" cy="1021.5" r="11" fill="url(#cbg)"/><path d="M1891 1016.5l4.5 5-4.5 5M1896 1016.5l4.5 5-4.5 5" fill="none" stroke="#333" stroke-width="1.8"/><g transform="translate(1898.8 983.6)"><rect x="-2.8" y="-15" width="5.6" height="30" fill="#e81010" transform="rotate(0)"/><rect x="-2.8" y="-15" width="5.6" height="30" fill="#e81010" transform="rotate(60)"/><rect x="-2.8" y="-15" width="5.6" height="30" fill="#e81010" transform="rotate(120)"/></g></svg></body></html>
